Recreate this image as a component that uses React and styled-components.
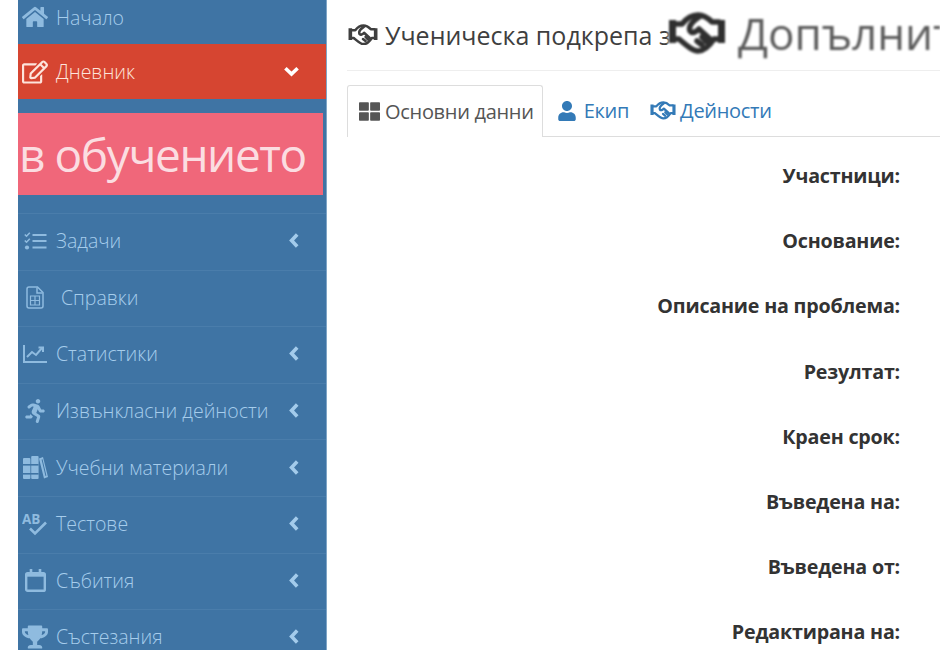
import React from "react";
import styled, { createGlobalStyle } from "styled-components";
import { FaHome, FaRegEdit, FaThLarge, FaUser, FaRunning, FaTrophy } from "react-icons/fa";

const Global = createGlobalStyle`
  html, body { margin: 0; padding: 0; background: #fff; }
  body { width: 940px; height: 650px; overflow: hidden; font-family: "Open Sans", "Liberation Sans", sans-serif; }
  * { box-sizing: border-box; }
`;

const Page = styled.div`
  display: flex;
  width: 940px;
  height: 650px;
  overflow: hidden;
  padding-left: 18px;
  background: #fff;
`;

const Sidebar = styled.nav`
  width: 309px;
  flex: none;
  height: 650px;
  overflow: hidden;
  background: #3f74a4;
  border-right: 1px solid #7fa5c6;
`;

const Menu = styled.div`
  margin-top: -10px;
  display: flex;
  flex-direction: column;
`;

const Row = styled.div`
  display: flex;
  align-items: center;
  height: ${(p) => p.$h || 56.6}px;
  padding: 0 27px ${(p) => (p.$line ? 2 : 0)}px 4px;
  font-size: 19.5px;
  font-weight: 300;
  letter-spacing: 0;
  color: ${(p) => (p.$active ? "#fde4dc" : "#a6cdec")};
  background: ${(p) => (p.$active ? "#d64531" : "transparent")};
  border-top: ${(p) => (p.$line ? "1px solid #4a7dab" : "0")};
`;

const IconBox = styled.span`
  width: 26px;
  flex: none;
  display: flex;
  justify-content: center;
  margin-right: ${(p) => p.$gap || 8}px;
  font-size: ${(p) => p.$s || 22}px;
  line-height: 0;
  color: ${(p) => (p.$active ? "#fde4dc" : "#8fbbdf")};
`;

const Label = styled.span`
  flex: 1;
  white-space: nowrap;
`;

const Caret = styled.svg`
  display: block;
  flex: none;
  color: ${(p) => (p.$active ? "#fff" : "#a3cbeb")};
`;

const Banner = styled.div`
  height: 82px;
  width: 305px;
  margin: 14px 0 18px;
  background: #f0677a;
  color: #fbdde1;
  font-size: 46px;
  line-height: 82px;
  white-space: nowrap;
  overflow: hidden;
  letter-spacing: -1.4px;
  padding-left: 1px;
`;

const Main = styled.main`
  position: relative;
  flex: 1;
  min-width: 0;
  overflow: hidden;
  padding: 0 0 0 20px;
  color: #333;
`;

const Title = styled.h1`
  margin: 0;
  height: 71px;
  display: flex;
  align-items: center;
  gap: 7px;
  padding: 0 0 1px 1px;
  font-size: 25px;
  font-weight: 400;
  white-space: nowrap;
  color: #3f3f3f;
  border-bottom: 1px solid #eee;
  & svg { flex: none; }
`;

const Overlay = styled.div`
  position: absolute;
  top: 5px;
  left: 341px;
  height: 56px;
  width: 272px;
  display: flex;
  align-items: center;
  gap: 12px;
  overflow: hidden;
  background: #fff;
  color: #5a5a5a;
  font-size: 44px;
  white-space: nowrap;
  filter: blur(0.9px);
  & svg { flex: none; color: #2f2f2f; }
`;

const Tabs = styled.div`
  display: flex;
  align-items: stretch;
  height: 52px;
  margin-top: 14px;
  font-size: 20px;
  letter-spacing: -0.3px;
  border-bottom: 1px solid #ddd;
`;

const Tab = styled.div`
  display: flex;
  align-items: center;
  gap: ${(p) => p.$gap || 4}px;
  padding: 0 ${(p) => p.$pr}px 0 ${(p) => p.$pl}px;
  color: ${(p) => (p.$active ? "#555" : "#337ab7")};
  background: ${(p) => (p.$active ? "#fff" : "transparent")};
  border: ${(p) => (p.$active ? "1px solid #ddd" : "0")};
  border-bottom: 0;
  margin-bottom: ${(p) => (p.$active ? "-1px" : "0")};
  border-radius: 3px 3px 0 0;
  white-space: nowrap;
`;

const Fields = styled.dl`
  margin: 0;
  padding-top: 26px;
  display: flex;
  flex-direction: column;
`;

const Field = styled.dt`
  height: 65.2px;
  padding-right: 40px;
  text-align: right;
  font-size: 19.7px;
  font-weight: 700;
  letter-spacing: -0.2px;
  line-height: 26px;
  color: #333;
`;

const Svg = styled.svg`
  display: block;
  flex: none;
`;

const Handshake = ({ w, sw = 4 }) => (
  <Svg width={w} height={(w * 42) / 58} viewBox="0 0 58 42" fill="none" stroke="currentColor" strokeWidth={sw} strokeLinecap="round" strokeLinejoin="round">
    <path d="M1 8h7v23H1zM50 8h7v23h-7z" fill="currentColor" stroke="none" />
    <path d="M7 12h7C18 7 24 3 30 3c6 0 10 3 14 7h7" />
    <path d="M7 27h4c7 6 13 12 19 12 6 0 12-6 16-12h5" />
    <path d="M31 5C25 9 20 14 22 19c2 3 6 1 9-2l11 10" />
    <path d="M34 33l-5-4M39 30l-5-5" />
  </Svg>
);

const TasksIcon = () => (
  <Svg width="23" height="18" viewBox="0 0 23 18" fill="none" stroke="currentColor">
    <path d="M8.5 3h14M8.5 9h14M8.5 15.5h14" strokeWidth="2.2" />
    <path d="M.8 2.5l1.7 1.7L5.8.8M.8 8.5l1.7 1.7 3.3-3.4" strokeWidth="1.6" />
    <circle cx="3" cy="15.5" r="2.1" fill="currentColor" stroke="none" />
  </Svg>
);

const SheetIcon = () => (
  <Svg width="18" height="23" viewBox="0 0 18 23" fill="none" stroke="currentColor" strokeWidth="1.5">
    <path d="M1 3a2 2 0 0 1 2-2h8.5L17 6.5V20a2 2 0 0 1-2 2H3a2 2 0 0 1-2-2z" />
    <path d="M11 1.5V7h5.5" />
    <path d="M4.5 10h9v9h-9zM4.5 14.5h9M9 10v9" strokeWidth="1.2" />
  </Svg>
);

const ChartIcon = () => (
  <Svg width="24" height="20" viewBox="0 0 24 20" fill="none" stroke="currentColor" strokeWidth="2">
    <path d="M1 1v17h23" />
    <path d="M4 13l5-5 4 3 6-7" />
    <path d="M15.5 3.5H20V8" />
  </Svg>
);

const BooksIcon = () => (
  <Svg width="25" height="23" viewBox="0 0 25 23" fill="currentColor">
    <rect x="0" y="2" width="7.4" height="21" rx="1" />
    <rect x="8.2" y="0" width="7.4" height="23" rx="1" />
    <rect x="0" y="8" width="15.6" height="1.6" fill="#3f74a4" />
    <rect x="0" y="17" width="15.6" height="1.6" fill="#3f74a4" />
    <path d="M16 2.5L20 1l5 20-4 1.6z" />
    <path d="M18.6 3.6l.9-.3 3.9 16.5-.9.3z" fill="#3f74a4" />
  </Svg>
);

const SpellIcon = () => (
  <Svg width="26" height="26" viewBox="0 0 26 26" fill="none" stroke="currentColor">
    <text x="0" y="13" fontFamily="Open Sans, sans-serif" fontSize="13.5" fontWeight="700" fill="currentColor" stroke="none">AB</text>
    <path d="M8 17.5l5 5 11-11" strokeWidth="2.6" />
  </Svg>
);

const CalendarIcon = () => (
  <Svg width="21" height="23" viewBox="0 0 21 23" fill="none" stroke="currentColor" strokeWidth="2.4">
    <rect x="1.2" y="4.2" width="18.6" height="17.6" rx="1.4" />
    <path d="M1.2 6h18.6" strokeWidth="3.4" />
    <path d="M6 0v4M15 0v4" strokeWidth="2.6" />
  </Svg>
);

const CaretLeft = () => (
  <Caret width="10" height="15" viewBox="0 0 10 15" fill="none" stroke="currentColor" strokeWidth="3.6">
    <path d="M8.2 1.6L2.6 7.5l5.6 5.9" />
  </Caret>
);

const CaretDown = () => (
  <Caret $active width="15" height="11" viewBox="0 0 15 11" fill="none" stroke="currentColor" strokeWidth="3.6">
    <path d="M1.4 2.2l6.1 5.8 6.1-5.8" />
  </Caret>
);

const items = [
  { t: "Задачи", i: <TasksIcon />, caret: true },
  { t: "Справки", i: <SheetIcon />, gap: 13 },
  { t: "Статистики", i: <ChartIcon />, caret: true },
  { t: "Извънкласни дейности", i: <FaRunning />, s: 24, caret: true },
  { t: "Учебни материали", i: <BooksIcon />, caret: true },
  { t: "Тестове", i: <SpellIcon />, caret: true },
  { t: "Събития", i: <CalendarIcon />, caret: true },
  { t: "Състезания", i: <FaTrophy />, s: 26, caret: true },
];

const fields = ["Участници:", "Основание:", "Описание на проблема:", "Резултат:", "Краен срок:", "Въведена на:", "Въведена от:", "Редактирана на:"];

export default function App() {
  return (
    <Page>
      <Global />
      <Sidebar>
        <Menu>
          <Row $h={54}>
            <IconBox $s={26}><FaHome /></IconBox>
            <Label>Начало</Label>
          </Row>
          <Row $h={55} $active>
            <IconBox $s={26} $active><FaRegEdit /></IconBox>
            <Label>Дневник</Label>
            <CaretDown />
          </Row>
          <Banner>в обучението</Banner>
          {items.map((it) => (
            <Row key={it.t} $line>
              <IconBox $gap={it.gap} $s={it.s}>{it.i}</IconBox>
              <Label>{it.t}</Label>
              {it.caret && <CaretLeft />}
            </Row>
          ))}
        </Menu>
      </Sidebar>
      <Main>
        <Title>
          <Handshake w={30} sw={5} />
          Ученическа подкрепа за
        </Title>
        <Overlay>
          <Handshake w={58} sw={5.5} />
          Допълнит
        </Overlay>
        <Tabs>
          <Tab $active $pl={11} $pr={8} $gap={5}><FaThLarge size={21} />Основни данни</Tab>
          <Tab $pl={14} $pr={21} $gap={7}><FaUser size={20} />Екип</Tab>
          <Tab $pl={0} $pr={10} $gap={4}><Handshake w={26} sw={5} />Дейности</Tab>
        </Tabs>
        <Fields>
          {fields.map((f) => <Field key={f}>{f}</Field>)}
        </Fields>
      </Main>
    </Page>
  );
}
